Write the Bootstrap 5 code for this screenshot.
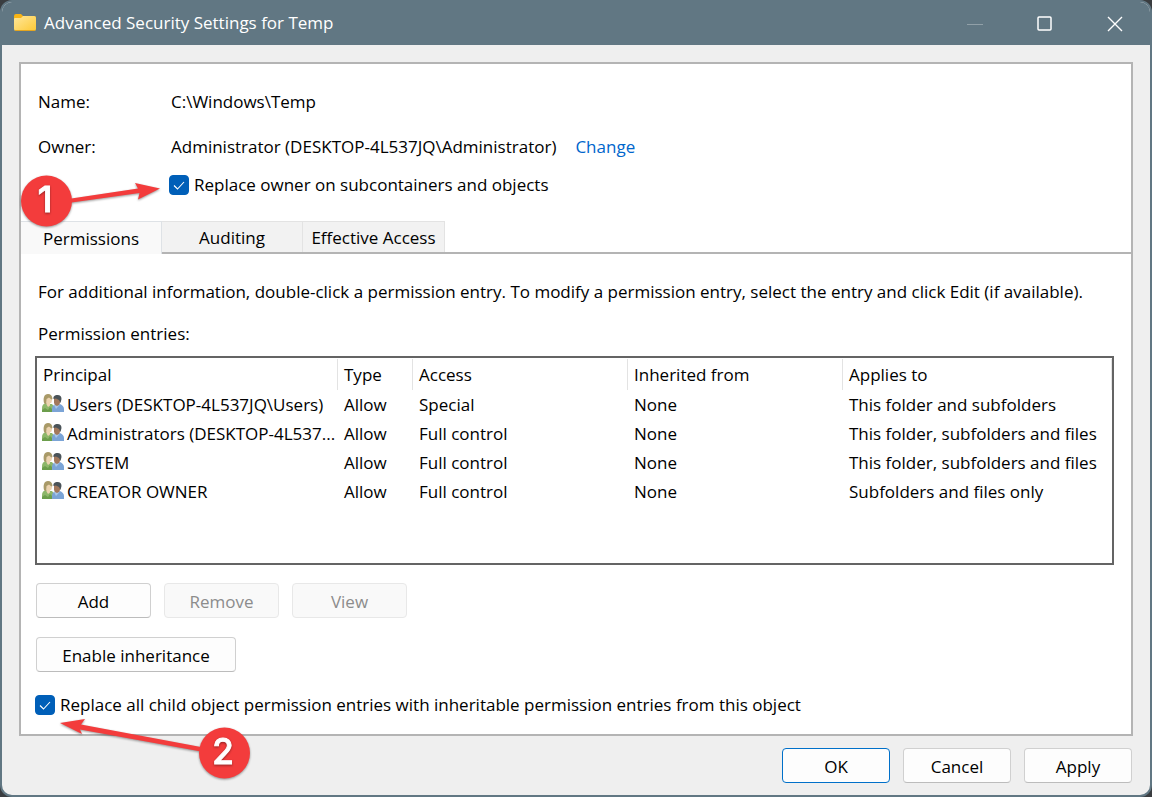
<!DOCTYPE html>
<html lang="en">
<head>
<meta charset="utf-8">
<meta name="viewport" content="width=device-width, initial-scale=1">
<title>Advanced Security Settings for Temp</title>
<link href="https://cdn.jsdelivr.net/npm/bootstrap@5.3.0/dist/css/bootstrap.min.css" rel="stylesheet">
<style>
  body { font-family: "Open Sans", "Noto Sans", sans-serif; font-size: 17px; line-height: 24px; color: #000; background: #3a3d40; }
  .dialog { background: #efefef; border: 2px solid #617783; border-radius: 12px; overflow: hidden; }
  .titlebar { background: #617783; color: #fff; height: 43px; padding: 0 0 2px 12px; }
  .titlebar h1 { font-size: 17px; line-height: 24px; }
  .caption-btn { width: 70px; height: 41px; background: none; border: 0; padding: 0; color: #fff; }
  .caption-btn:disabled { opacity: .3; }
  .sheet { background: #fff; border: 2px solid #b4b4b4; margin: 17px 17px 0; padding-top: 15px; }
  .field { padding: 0 17px; height: 45px; }
  .field-label { width: 133px; }
  .change-link { color: #0066cc; margin-left: 19px; }
  .owner-check { margin-left: 148px; height: 32px; }
  .child-check { height: 32px; }
  .form-check-input.tick { width: 20px; height: 20px; margin: 0; border-radius: 4px; flex: none; }
  .form-check-input.tick:checked { background-color: #005fb8; border-color: #005fb8; background-size: 20px;
    background-image: url("data:image/svg+xml,%3csvg xmlns='http://www.w3.org/2000/svg' viewBox='0 0 20 20'%3e%3cpath fill='none' stroke='%23fff' stroke-width='1.1' d='M5 10.500l3.500 3.500 6.500-7'/%3e%3c/svg%3e"); }
  .tick + label { padding-left: 5px; }
  .sheet-tabs { border-bottom: 2px solid #b4b4b4; margin-top: 20px; }
  .sheet-tabs .nav-link { width: 141px; height: 31px; padding: 2px 0 0; color: #000; background: #f2f2f2; border: 1px solid #e3e3e3; border-width: 1px 1px 0 0; border-radius: 0; margin: 0; white-space: nowrap; }
  .sheet-tabs .nav-link.active { height: 33px; margin-bottom: -2px; background: #f9f9f9; color: #000; }
  .sheet-tabs .nav-link.wide { width: 142px; }
  .pane { padding: 26px 17px 12px 14px; }
  .pane-text { margin: 0 0 18px 3px; }
  .entries { border: 2px solid #646464; height: 209px; margin: -8px 0 18px; }
  .entries table { table-layout: fixed; margin: 0; --bs-table-bg: transparent; color: #000; }
  .entries th, .entries td { height: 29px; padding: 0 0 0 6px; border: 0; font-weight: 400; line-height: 24px; white-space: nowrap; vertical-align: middle; color: #000; }
  .entries th { height: 32px; }
  .head-cell { height: 31px; padding-top: 4px; border-right: 1px solid #e3e3e3; }
  .entries td:first-child { padding-left: 5px; }
  .people { width: 22px; height: 19px; margin-right: 3px; vertical-align: -2px; }
  .c-principal { width: 301px; } .c-type { width: 75px; } .c-mid { width: 215px; }
  .win-btn { --bs-btn-font-size: 17px; --bs-btn-line-height: 24px; --bs-btn-color: #000; --bs-btn-bg: #fdfdfd; --bs-btn-border-color: #d0d0d0; --bs-btn-border-radius: 4px;
    --bs-btn-hover-bg: #e8f2fb; --bs-btn-hover-border-color: #0078d4; --bs-btn-disabled-color: #8c8c8c; --bs-btn-disabled-bg: #f9f9f9; --bs-btn-disabled-border-color: #e8e8e8; --bs-btn-disabled-opacity: 1;
    height: 35px; padding: 2px 0 0; width: 115px; border-bottom-color: #bcbcbc; }
  .win-btn:disabled { border-bottom-color: #e8e8e8; }
  .entry-actions { gap: 13px; margin: 0 0 19px 1px; }
  .win-btn.extended { width: 200px; margin: 0 0 17px 1px; }
  .footer-bar { gap: 13px; padding: 12px 18px; }
  .footer-bar .win-btn { width: 108px; }
  .win-btn.primary { border-color: #0070c9; background: #fdfdfd; }
  .callout-1, .callout-2 { position: absolute; pointer-events: none; overflow: visible; z-index: 2; }
  .callout-1 { left: -149px; top: 1px; width: 142px; height: 60px; }
  .callout-2 { left: 20px; top: 20px; width: 200px; height: 70px; }
  .callout-1 text, .callout-2 text { font: 500 35px "Inter", sans-serif; fill: #fff; stroke: #fff; stroke-width: 1px; text-anchor: middle; }
  .dropshade { filter: drop-shadow(0 1px 1px rgba(0,0,0,.4)); }
</style>
</head>
<body>
<svg class="d-none" aria-hidden="true">
  <symbol id="people" viewBox="0 0 22 19">
    <path fill="#8db76a" d="M0 18v-4q0-4 4-5l3 1 3 0q2 2 2 4v4z"/>
    <path fill="#6c9e4c" d="M0 18h11v-2L8 13l-2 3-3-2-3 2z"/>
    <path fill="#a99a68" d="M2 9C1 4 2 0 6 0q4 0 4.500 5L9 6 5 5.500 4.500 10H3z"/>
    <path fill="#ecd3b0" d="M4.500 5L7 3.500 10 6 9.500 8.500 8 9.500v2L6 13 4.500 10.500z"/>
    <path fill="#7ba4d6" d="M10 18v-3q0-4 4-5h4q4 2 4 5v3z"/>
    <path fill="#a9c6e8" d="M12 11l2 4 4-4.500-2-1z"/>
    <path fill="#a2785c" d="M12 4h6v5l-1 2-2 1-2-1-1-2z"/>
    <path fill="#4a5358" d="M11.500 5C11 2 13 1 15.500 1q4 0 4 4l-1 4-1.500-3-3-1.500z"/>
  </symbol>
</svg>
<main class="dialog d-flex flex-column min-vh-100">
  <header class="titlebar d-flex align-items-center">
    <svg width="22" height="18" viewBox="0 0 22 18" aria-hidden="true">
      <defs><linearGradient id="fold" x1="0" y1="0" x2="1" y2="1"><stop offset="0" stop-color="#ffe79b"/><stop offset="1" stop-color="#fdc935"/></linearGradient></defs>
      <path fill="#f9b414" d="M0 2q0-2 2-2h5l2 2h11q2 0 2 2v8H0z"/>
      <path fill="url(#fold)" d="M0 5q0-1 1-1h6l2-2h11q2 0 2 2v11q0 2-2 2H2q-2 0-2-2z"/>
      <path fill="none" stroke="#e4a520" d="M1 16.500h20"/>
    </svg>
    <h1 class="mb-0 ms-2 fw-normal flex-grow-1">Advanced Security Settings for Temp</h1>
    <button class="caption-btn" type="button" disabled aria-label="Minimize"><svg width="16" height="16"><path stroke="#fff" d="M0 8.500h16"/></svg></button>
    <button class="caption-btn" type="button" aria-label="Maximize"><svg width="16" height="16"><rect x="1" y="1" width="13" height="13" rx="1" fill="none" stroke="#fff" stroke-width="1.500"/></svg></button>
    <button class="caption-btn" type="button" aria-label="Close"><svg width="16" height="16"><path stroke="#fff" stroke-width="1.400" d="M1 1l14 14M15 1L1 15"/></svg></button>
  </header>

  <section class="sheet flex-grow-1">
    <div class="field d-flex align-items-center"><span class="field-label">Name:</span><span>C:\Windows\Temp</span></div>
    <div class="field d-flex align-items-center"><span class="field-label">Owner:</span><span>Administrator (DESKTOP-4L537JQ\Administrator)</span><a class="change-link text-decoration-none" href="#">Change</a></div>
    <div class="owner-check d-flex align-items-center position-relative">
      <input class="form-check-input tick" type="checkbox" id="replaceOwner" checked>
      <label for="replaceOwner">Replace owner on subcontainers and objects</label>
      <svg class="callout-1" viewBox="0 0 142 60" aria-hidden="true">
        <g class="dropshade"><path fill="#f33c3c" d="M48 29L118 18.500l-3-5.500 25 5.500-22 11 1.500-6.500L48 33z"/><circle cx="26.500" cy="31" r="25.500" fill="#f33c3c"/></g>
        <text class="dropshade" x="25" y="42">1</text>
      </svg>
    </div>

    <ul class="nav nav-tabs sheet-tabs flex-nowrap" role="tablist">
      <li class="nav-item" role="presentation"><button class="nav-link active" role="tab" aria-selected="true" type="button">Permissions</button></li>
      <li class="nav-item" role="presentation"><button class="nav-link" role="tab" aria-selected="false" type="button">Auditing</button></li>
      <li class="nav-item" role="presentation"><button class="nav-link wide" role="tab" aria-selected="false" type="button">Effective Access</button></li>
    </ul>

    <div class="pane" role="tabpanel">
      <p class="pane-text">For additional information, double-click a permission entry. To modify a permission entry, select the entry and click Edit (if available).</p>
      <p class="pane-text">Permission entries:</p>
      <div class="entries">
        <table class="table">
          <colgroup><col class="c-principal"><col class="c-type"><col class="c-mid"><col class="c-mid"><col></colgroup>
          <thead><tr><th scope="col"><div class="head-cell">Principal</div></th><th scope="col"><div class="head-cell">Type</div></th><th scope="col"><div class="head-cell">Access</div></th><th scope="col"><div class="head-cell">Inherited from</div></th><th scope="col"><div class="head-cell">Applies to</div></th></tr></thead>
          <tbody>
            <tr><td><svg class="people" aria-hidden="true"><use href="#people"/></svg>Users (DESKTOP-4L537JQ\Users)</td><td>Allow</td><td>Special</td><td>None</td><td>This folder and subfolders</td></tr>
            <tr><td><svg class="people" aria-hidden="true"><use href="#people"/></svg>Administrators (DESKTOP-4L537...</td><td>Allow</td><td>Full control</td><td>None</td><td>This folder, subfolders and files</td></tr>
            <tr><td><svg class="people" aria-hidden="true"><use href="#people"/></svg>SYSTEM</td><td>Allow</td><td>Full control</td><td>None</td><td>This folder, subfolders and files</td></tr>
            <tr><td><svg class="people" aria-hidden="true"><use href="#people"/></svg>CREATOR OWNER</td><td>Allow</td><td>Full control</td><td>None</td><td>Subfolders and files only</td></tr>
          </tbody>
        </table>
      </div>
      <div class="d-flex entry-actions">
        <button class="btn win-btn" type="button">Add</button>
        <button class="btn win-btn" type="button" disabled>Remove</button>
        <button class="btn win-btn" type="button" disabled>View</button>
      </div>
      <button class="btn win-btn extended" type="button">Enable inheritance</button>
      <div class="child-check d-flex align-items-center position-relative">
        <input class="form-check-input tick" type="checkbox" id="replaceChild" checked>
        <label for="replaceChild">Replace all child object permission entries with inheritable permission entries from this object</label>
        <svg class="callout-2" viewBox="0 0 200 70" aria-hidden="true">
          <g class="dropshade"><path fill="#f33c3c" d="M5 14l25-4-4 5.500L146 38v4.500L25 20.500l2 4.500z"/><circle cx="169.500" cy="44" r="25.500" fill="#f33c3c"/></g>
          <text class="dropshade" x="168" y="55">2</text>
        </svg>
      </div>
    </div>
  </section>

  <footer class="footer-bar d-flex justify-content-end">
    <button class="btn win-btn primary" type="button">OK</button>
    <button class="btn win-btn" type="button">Cancel</button>
    <button class="btn win-btn" type="button">Apply</button>
  </footer>
</main>
<script src="https://cdn.jsdelivr.net/npm/bootstrap@5.3.0/dist/js/bootstrap.bundle.min.js"></script>
</body>
</html>
